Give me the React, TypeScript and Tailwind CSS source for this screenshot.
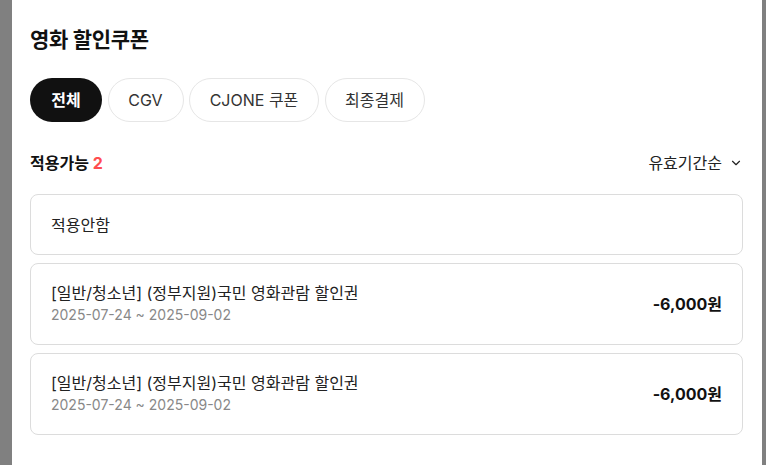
import { ChevronDown } from 'lucide-react';

const chips = [
  { label: '전체', w: 'w-[72px]', active: true },
  { label: 'CGV', w: 'w-[76px]', active: false },
  { label: 'CJONE 쿠폰', w: 'w-[130px]', active: false },
  { label: '최종결제', w: 'w-[100px]', active: false },
];

const coupons = [
  { title: '[일반/청소년] (정부지원)국민 영화관람 할인권', period: '2025-07-24 ~ 2025-09-02', amount: '-6,000원' },
  { title: '[일반/청소년] (정부지원)국민 영화관람 할인권', period: '2025-07-24 ~ 2025-09-02', amount: '-6,000원' },
];

export default function App() {
  return (
    <div
      className="flex h-[465px] w-[766px] overflow-hidden bg-[#808080]"
      style={{ fontFamily: 'Inter, "Noto Sans CJK KR", sans-serif' }}
    >
      <div className="ml-[12px] h-full w-[750px] bg-white pl-[18px] pr-[19px] pt-[26px]">
        <h1 className="h-7 text-[21px] font-bold leading-7 tracking-[-0.3px] text-[#111]">영화 할인쿠폰</h1>

        <div className="mt-6 flex gap-[5.5px]">
          {chips.map((c) => (
            <button
              key={c.label}
              className={
                c.active
                  ? `${c.w} h-11 rounded-full bg-[#111] text-[16px] font-bold text-white`
                  : `${c.w} h-11 rounded-full border border-[#e6e6e6] bg-white text-[16px] text-[#333]`
              }
            >
              {c.label}
            </button>
          ))}
        </div>

        <div className="mt-[29px] flex h-6 items-center justify-between">
          <div className="text-[16px] font-bold text-[#111]">
            적용가능 <span className="text-[#ff4d4f]">2</span>
          </div>
          <div className="flex items-center gap-[7px] text-[16px] text-[#222]">
            유효기간순
            <ChevronDown className="h-[14px] w-[14px]" strokeWidth={2} />
          </div>
        </div>

        <div className="mt-[19px] flex flex-col gap-2">
          <div className="flex h-[61px] items-center rounded-lg border border-[#dcdcdc] px-5 text-[16px] text-[#222]">
            적용안함
          </div>
          {coupons.map((c, i) => (
            <div
              key={i}
              className="flex h-[82px] items-center justify-between rounded-lg border border-[#dcdcdc] pl-5 pr-[20px]"
            >
              <div className="flex flex-col">
                <span className="text-[16px] leading-[22px] text-[#222]">{c.title}</span>
                <span className="text-[14px] leading-[22px] text-[#888]">{c.period}</span>
              </div>
              <span className="text-[16px] font-bold text-[#111]">{c.amount}</span>
            </div>
          ))}
        </div>
      </div>
    </div>
  );
}
